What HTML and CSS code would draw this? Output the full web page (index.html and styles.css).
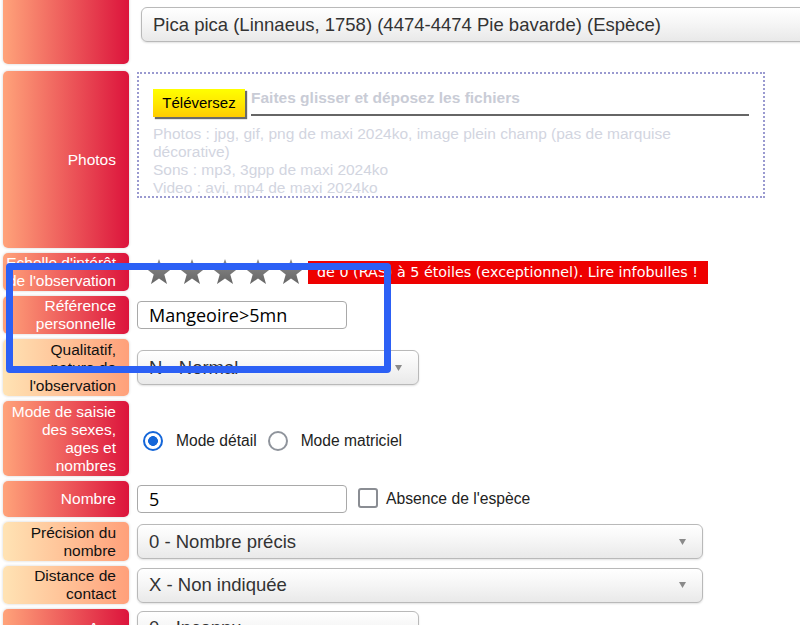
FILE: index.html
```html
<!DOCTYPE html>
<html lang="fr">
<head>
<meta charset="utf-8">
<title>Saisie d'observation</title>
<link rel="stylesheet" href="styles.css">
</head>
<body>
<div class="form">
  <div class="row row-species">
    <div class="lbl red"></div>
    <div class="val val-top">
      <div class="select select-species"><span>Pica pica (Linnaeus, 1758) (4474-4474 Pie bavarde) (Espèce)</span></div>
    </div>
  </div>

  <div class="row row-photos">
    <div class="lbl red"><span>Photos</span></div>
    <div class="val val-top">
      <div class="dropzone">
        <div class="dz-top">
          <div class="btn-upload">Téléversez</div>
          <div class="dz-title">Faites glisser et déposez les fichiers</div>
        </div>
        <div class="dz-info">
          Photos : jpg, gif, png de maxi 2024ko, image plein champ (pas de marquise<br>
          décorative)<br>
          Sons : mp3, 3gpp de maxi 2024ko<br>
          Video : avi, mp4 de maxi 2024ko
        </div>
      </div>
    </div>
  </div>

  <div class="row row-h38">
    <div class="lbl red"><span>Echelle d'intérêt<br>de l'observation</span></div>
    <div class="val">
      <div class="stars">
        <svg class="star" viewBox="0 0 28 28"><defs><linearGradient id="sg" x1="0" y1="0" x2="0" y2="1"><stop offset="0" stop-color="#8a8a8a"/><stop offset="1" stop-color="#666"/></linearGradient></defs><path d="M14 1 L17.3 10.3 L27 10.5 L19.3 16.4 L22 26 L14 20.4 L6 26 L8.7 16.4 L1 10.5 L10.7 10.3 Z" fill="url(#sg)"/></svg>
        <svg class="star" viewBox="0 0 28 28"><path d="M14 1 L17.3 10.3 L27 10.5 L19.3 16.4 L22 26 L14 20.4 L6 26 L8.7 16.4 L1 10.5 L10.7 10.3 Z" fill="url(#sg)"/></svg>
        <svg class="star" viewBox="0 0 28 28"><path d="M14 1 L17.3 10.3 L27 10.5 L19.3 16.4 L22 26 L14 20.4 L6 26 L8.7 16.4 L1 10.5 L10.7 10.3 Z" fill="url(#sg)"/></svg>
        <svg class="star" viewBox="0 0 28 28"><path d="M14 1 L17.3 10.3 L27 10.5 L19.3 16.4 L22 26 L14 20.4 L6 26 L8.7 16.4 L1 10.5 L10.7 10.3 Z" fill="url(#sg)"/></svg>
        <svg class="star" viewBox="0 0 28 28"><path d="M14 1 L17.3 10.3 L27 10.5 L19.3 16.4 L22 26 L14 20.4 L6 26 L8.7 16.4 L1 10.5 L10.7 10.3 Z" fill="url(#sg)"/></svg>
      </div>
      <div class="hint">de 0 (RAS) à 5 étoiles (exceptionnel). Lire infobulles !</div>
    </div>
  </div>

  <div class="row row-h38">
    <div class="lbl red"><span>Référence<br>personnelle</span></div>
    <div class="val">
      <div class="input">Mangeoire&gt;5mn</div>
    </div>
  </div>

  <div class="row row-h57">
    <div class="lbl orange"><span>Qualitatif,<br>nature de<br>l'observation</span></div>
    <div class="val">
      <div class="select select-short"><span>N - Normal</span><svg class="arrow" viewBox="0 0 7 6"><polygon points="0,0 7,0 3.5,6" fill="#8a8a8a"/></svg></div>
    </div>
  </div>

  <div class="row row-h75">
    <div class="lbl red"><span>Mode de saisie<br>des sexes,<br>ages et<br>nombres</span></div>
    <div class="val val-radios">
      <span class="radio checked"></span><span class="radio-text">Mode détail</span>
      <span class="radio"></span><span class="radio-text">Mode matriciel</span>
    </div>
  </div>

  <div class="row row-h36">
    <div class="lbl red"><span>Nombre</span></div>
    <div class="val">
      <div class="input">5</div>
      <span class="checkbox"></span><span class="check-text">Absence de l'espèce</span>
    </div>
  </div>

  <div class="row row-h39">
    <div class="lbl orange"><span>Précision du<br>nombre</span></div>
    <div class="val">
      <div class="select select-long"><span>0 - Nombre précis</span><svg class="arrow" viewBox="0 0 7 6"><polygon points="0,0 7,0 3.5,6" fill="#8a8a8a"/></svg></div>
    </div>
  </div>

  <div class="row row-h38">
    <div class="lbl orange"><span>Distance de<br>contact</span></div>
    <div class="val">
      <div class="select select-long"><span>X - Non indiquée</span><svg class="arrow" viewBox="0 0 7 6"><polygon points="0,0 7,0 3.5,6" fill="#8a8a8a"/></svg></div>
    </div>
  </div>

  <div class="row row-h38">
    <div class="lbl red"><span>Age</span></div>
    <div class="val">
      <div class="select select-short"><span>0 - Inconnu</span><svg class="arrow" viewBox="0 0 7 6"><polygon points="0,0 7,0 3.5,6" fill="#8a8a8a"/></svg></div>
    </div>
  </div>
</div>
<div class="highlight"></div>
</body>
</html>
```

FILE: styles.css
```css
html, body {
  margin: 0;
  padding: 0;
  background: #fff;
  overflow: hidden;
}

body {
  font-family: "Liberation Sans", Arial, sans-serif;
  position: relative;
  width: 800px;
  height: 625px;
}

.form {
  display: flex;
  flex-direction: column;
  gap: 5px;
  margin-top: -10px;
  padding-left: 3px;
}

.row {
  display: grid;
  grid-template-columns: 126px 1fr;
  column-gap: 8px;
}

.row-species { height: 74px; margin-bottom: 2px; }
.row-photos { height: 177px; }
.row-h36 { height: 36px; }
.row-h38 { height: 38px; }
.row-h39 { height: 39px; }
.row-h57 { height: 57px; }
.row-h75 { height: 75px; }

.lbl {
  border-radius: 5px;
  display: flex;
  align-items: center;
  justify-content: flex-end;
  text-align: right;
  padding-right: 13px;
  font-size: 15.5px;
  line-height: 18px;
  box-shadow: 0 0 3px rgba(0, 0, 0, 0.18);
}

.lbl.red {
  background: linear-gradient(to right, #ffa37a, #dc143c);
  color: #fff;
}

.lbl.orange {
  background: linear-gradient(to right, #ffe3b4, #ffa07a);
  color: #111;
}

.val {
  display: flex;
  align-items: center;
  min-width: 0;
}

.val-top {
  align-items: flex-start;
}

.row-species .val-top { padding-top: 17px; }

/* selects */
.select {
  box-sizing: border-box;
  display: flex;
  align-items: center;
  justify-content: space-between;
  height: 35px;
  padding: 0 16px 0 11px;
  border: 1px solid #b9b9b9;
  border-radius: 6px;
  background: linear-gradient(to bottom, #ffffff 0%, #f6f6f6 45%, #e9e9e9 100%);
  box-shadow: 0 1px 2px rgba(0, 0, 0, 0.12);
  color: #333;
  font-size: 18.5px;
  white-space: nowrap;
}

.select-species {
  margin-left: 4px;
  width: 720px;
  flex-shrink: 0;
}

.select-short { width: 282px; }
.select-long { width: 566px; }

.arrow {
  width: 7px;
  height: 6px;
  flex-shrink: 0;
}

/* dropzone */
.dropzone {
  box-sizing: border-box;
  margin-top: 1px;
  width: 628px;
  height: 126px;
  border: 2px dotted #9a9ad0;
  padding: 15px 14px;
}

.dz-top {
  display: flex;
  align-items: flex-start;
}

.btn-upload {
  box-sizing: border-box;
  width: 92px;
  height: 28px;
  flex-shrink: 0;
  background: linear-gradient(to bottom, #ffff00 0%, #ffe800 50%, #ffcc00 100%);
  box-shadow: 2px 2px 1px #6a6a6a;
  color: #000;
  font-size: 15px;
  line-height: 28px;
  text-align: center;
}

.dz-title {
  flex: 1;
  margin-left: 6px;
  padding-bottom: 7px;
  border-bottom: 2px solid #666;
  color: #c9ccd6;
  font-weight: bold;
  font-size: 15.5px;
  line-height: 18px;
}

.dz-info {
  margin-top: 8px;
  color: #d2d5df;
  font-size: 15.5px;
  line-height: 18px;
}

/* stars + hint */
.stars {
  display: flex;
  gap: 5px;
  margin-left: 8px;
}

.star {
  width: 28px;
  height: 28px;
}

.hint {
  margin-left: 3px;
  height: 23px;
  padding: 0 10px 0 9px;
  background: #ee0000;
  color: #fff;
  font-family: "DejaVu Sans", Verdana, sans-serif;
  font-size: 14.3px;
  line-height: 23px;
  white-space: nowrap;
}

/* inputs */
.input {
  box-sizing: border-box;
  width: 210px;
  height: 28px;
  padding-left: 11px;
  border: 1px solid #a9a9a9;
  border-radius: 4px;
  background: #fff;
  color: #000;
  font-family: "Open Sans", "Noto Sans", sans-serif;
  font-size: 18px;
  line-height: 26px;
  flex-shrink: 0;
}

/* radios */
.val-radios {
  padding-top: 5px;
}

.radio {
  box-sizing: border-box;
  width: 20px;
  height: 20px;
  border-radius: 50%;
  border: 2px solid #8f949c;
  background: #fff;
  flex-shrink: 0;
  margin-left: 11px;
}

.radio:first-child {
  margin-left: 6px;
}

.radio.checked {
  border-color: #1466d9;
  background: radial-gradient(circle, #1466d9 0 4.6px, #fff 5.2px);
}

.radio-text {
  margin-left: 13px;
  color: #222;
  font-size: 15.6px;
}

/* checkbox */
.checkbox {
  box-sizing: border-box;
  width: 20px;
  height: 20px;
  margin-left: 11px;
  margin-top: -2px;
  border: 2px solid #8a8d93;
  border-radius: 3px;
  background: #fff;
  flex-shrink: 0;
}

.check-text {
  margin-left: 8px;
  color: #222;
  font-size: 15.7px;
}

/* annotation overlay */
.highlight {
  position: absolute;
  left: 6px;
  top: 263px;
  width: 385px;
  height: 110px;
  box-sizing: border-box;
  border: 7px solid #2c60f5;
  border-radius: 4px;
}
```
